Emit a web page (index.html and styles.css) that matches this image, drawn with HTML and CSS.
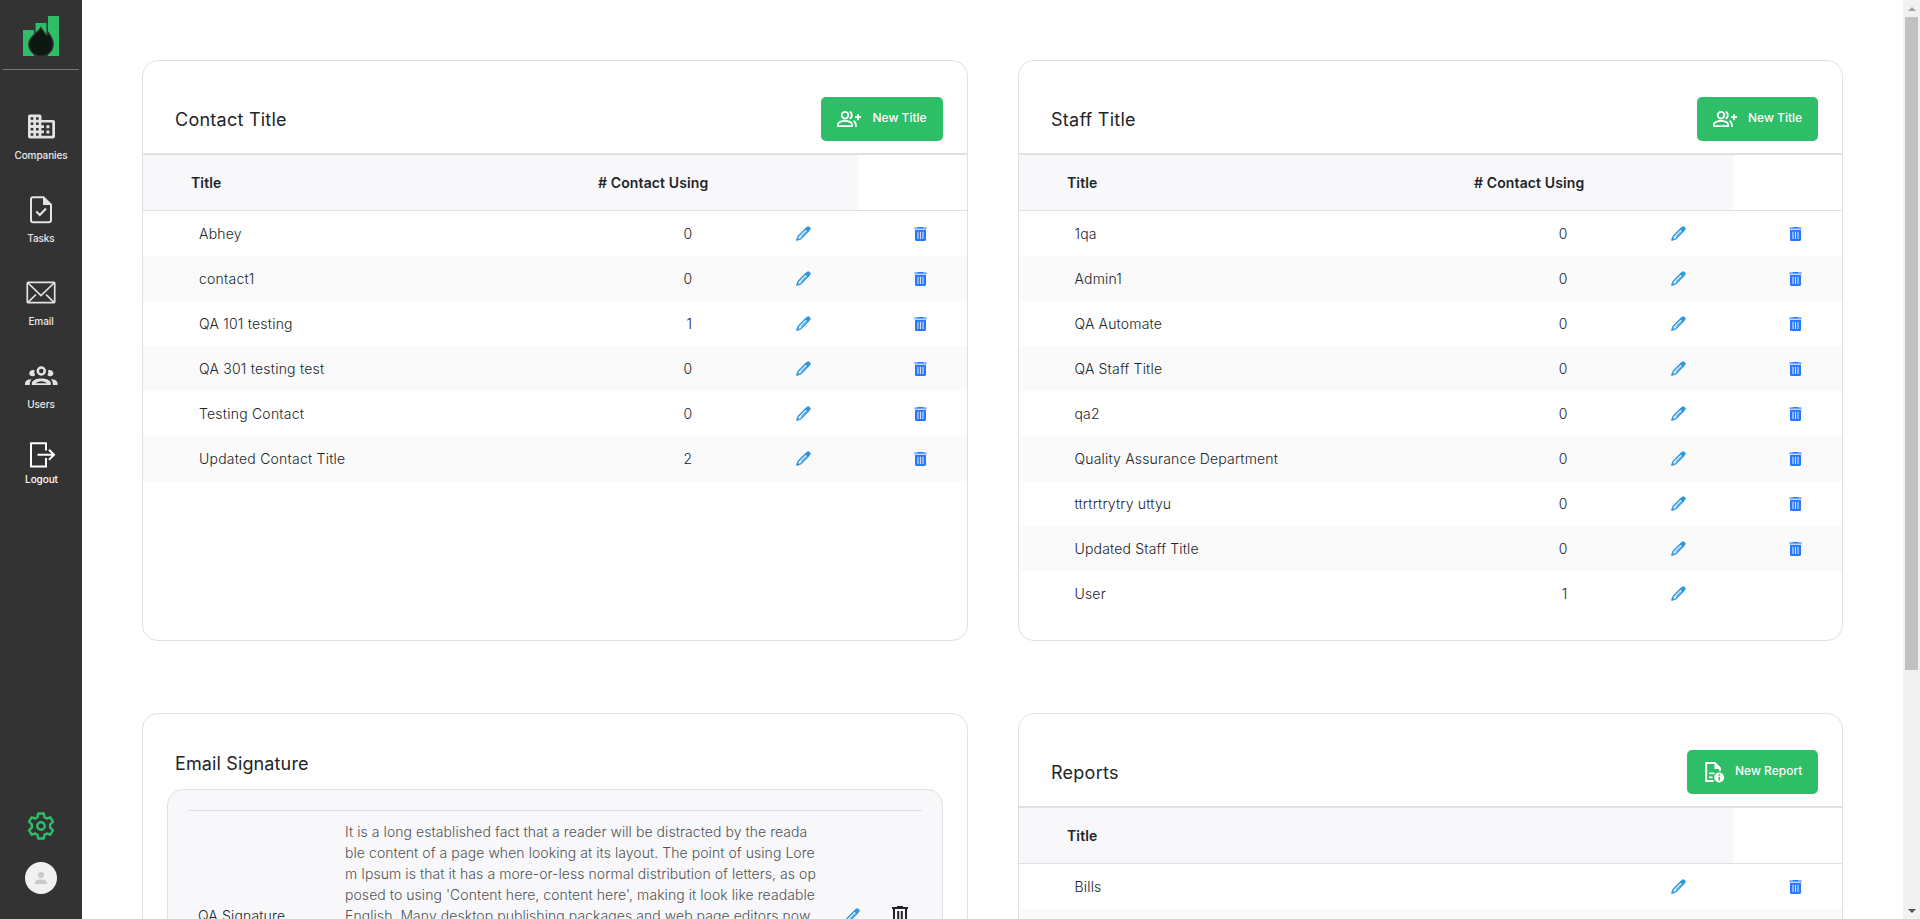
FILE: index.html
```html
<!DOCTYPE html>
<html lang="en">
<head>
<meta charset="utf-8">
<title>Settings</title>
<link rel="stylesheet" href="styles.css">
</head>
<body>
<svg class="defs" width="0" height="0">
  <symbol id="pencil" viewBox="0 0 15 15">
    <path d="M1.200 13.800 2.200 10.200 10.200 2.300 12.700 4.800 4.800 12.800Z" fill="#eaf5fd" stroke="#2f96e0" stroke-width="1.400" stroke-linejoin="round"/>
    <path d="M5 10.600 10.400 5.200" stroke="#2f96e0" stroke-width="1" fill="none"/>
    <path d="M8.800 3 11.400.6Q12.400-.2 13.300.7L14.300 1.800Q15.200 2.700 14.400 3.600L12 6.200Z" fill="#2f96e0"/>
    <path d="M.2 14.800 1 11.600 3.400 14Z" fill="#2f96e0"/>
  </symbol>
  <symbol id="trash" viewBox="0 0 13 14">
    <path d="M4 0h5l.6.500H12.500V1.800H.5V.5H3.400Z" fill="currentColor"/>
    <path d="M.5 1.800H12.500V3H.5Z" fill="#c5d4fb"/>
    <path d="M1 3H12V12.400Q12 14 10.400 14H2.600Q1 14 1 12.400Z" fill="currentColor"/>
    <path d="M4 4.800V12M6.500 4.800V12M9 4.800V12" stroke="#d5e0ff" stroke-width="1.100"/>
  </symbol>
  <symbol id="people-plus" viewBox="0 0 24 16">
    <g fill="none" stroke="#fff" stroke-width="1.800">
      <circle cx="8" cy="4.200" r="3.300"/>
      <path d="M.9 15.100V13.300C.9 11.200 4.500 9.900 8 9.900S15.100 11.200 15.100 13.300V15.100Z"/>
      <path d="M12.600.9C15.500 1.600 15.500 6.800 12.600 7.500M16.500 9.800C18.400 10.800 19 12 19 16"/>
      <path d="M21 3.200V9.200M18 6.200H24"/>
    </g>
  </symbol>
</svg>

<aside class="sidebar">
  <div class="brand">
    <svg width="37" height="41" viewBox="0 0 37 41">
      <path d="M0 14H11V40H0ZM12.500 7H23.500V40H12.500ZM25 0H36V40H25Z" fill="#2dbe67"/>
      <path d="M18 11.500C20 15 22 16.800 23.400 19.500Q24.700 18.500 25.400 16.700C28 20 30.200 24 30.200 28A12.200 12.200 0 0 1 5.800 28C5.800 20.500 14.500 17.500 18 11.500Z" fill="#0e1813" stroke="#333" stroke-width="1.400"/>
    </svg>
  </div>
  <nav class="nav">
    <a class="nav-item">
      <svg width="34" height="34" viewBox="0 0 34 34">
        <path d="M6 4.500H15.500Q17.500 4.500 17.500 6.500V10H29Q31 10 31 12V26.500Q31 28.500 29 28.500H6Q4 28.500 4 26.500V6.500Q4 4.500 6 4.500Z" fill="#e3e3e3"/>
        <path d="M6.700 7.200h2.600v2.600h-2.600zM12 7.200H14.600v2.600h-2.600zM6.700 12.500h2.600v2.600h-2.600zM12 12.500H14.600v2.600h-2.600zM6.700 17.900h2.600v2.600h-2.600zM12 17.900H14.600v2.600h-2.600zM6.700 23.200h2.600v2.600h-2.600zM12 23.200H14.600v2.600h-2.600z" fill="#333"/>
        <path d="M17.400 12.600H28.300V25.800H17.400V23.200H20V20.600H17.400V18H20V15.300H17.400Z" fill="#333"/>
        <path d="M22.400 15.300h3v3h-3zM22.400 20.500h3v3h-3z" fill="#e3e3e3"/>
      </svg>
      <span>Companies</span>
    </a>
    <a class="nav-item">
      <svg width="34" height="34" viewBox="0 0 34 34">
        <path d="M9 4.200H19.500L27 11.700V27Q27 29.200 24.800 29.200H9Q7 29.200 7 27V6.200Q7 4.200 9 4.200Z" fill="none" stroke="#e3e3e3" stroke-width="2"/>
        <path d="M19 4V12H27.500Z" fill="#e3e3e3"/>
        <path d="M12.300 18.500 15.800 22 22 15.500" fill="none" stroke="#e3e3e3" stroke-width="2"/>
      </svg>
      <span>Tasks</span>
    </a>
    <a class="nav-item">
      <svg width="34" height="34" viewBox="0 0 34 34" fill="none" stroke="#e3e3e3" stroke-width="1.700">
        <rect x="3.300" y="6.300" width="27.400" height="20.400" rx="1"/>
        <path d="M4 7 17 19.500 30 7M4 26.300 12 18.500M30 26.300 22 18.500"/>
      </svg>
      <span>Email</span>
    </a>
    <a class="nav-item">
      <svg width="34" height="34" viewBox="0 0 34 34">
        <circle cx="17.300" cy="12" r="3.500" fill="none" stroke="#e3e3e3" stroke-width="2.500"/>
        <path d="M10.500 11.200C6.800 10.500 5 13 5.200 14.800 5.500 17.500 9.500 18.300 11.200 15.800Q9.800 13.500 10.500 11.200ZM24.100 11.200C27.800 10.500 29.600 13 29.400 14.800 29.100 17.500 25.100 18.300 23.400 15.800Q24.800 13.500 24.100 11.200Z" fill="#e3e3e3"/>
        <path d="M7.800 26V23.800C9.300 18 25.300 18 26.800 23.800V26Z" fill="#e3e3e3"/>
        <path d="M11.300 24.200Q17.300 20.200 23.300 24.200Z" fill="#333"/>
        <path d="M1 26V24Q2 20 7.500 20.200 5.500 22.500 5.700 26ZM33.600 26V24Q32.600 20 27.100 20.200 29.100 22.500 28.900 26Z" fill="#e3e3e3"/>
      </svg>
      <span>Users</span>
    </a>
    <a class="nav-item logout">
      <svg width="34" height="34" viewBox="0 0 34 34" fill="none" stroke="#fff" stroke-width="2">
        <path d="M22 12.500V5.200H7V28.500H22V20M13.500 16.700H30M25 11.700 30 16.700 25 21.700"/>
      </svg>
      <span>Logout</span>
    </a>
  </nav>
  <div class="side-bottom">
    <svg width="26" height="28" viewBox="0 0 26 28" fill="none" stroke="#2dbe67" stroke-width="2.400" stroke-linejoin="round">
      <path d="M10.200 1.500H15.800L16.500 5.200 18.800 6.500 22.300 5.300 25 9.700 22.200 12.300V15.700L25 18.300 22.300 22.700 18.800 21.500 16.500 22.800 15.800 26.500H10.200L9.500 22.800 7.200 21.500 3.700 22.700 1 18.300 3.800 15.700V12.300L1 9.700 3.700 5.300 7.200 6.500 9.500 5.200Z"/>
      <circle cx="13" cy="14" r="3.700"/>
    </svg>
    <div class="avatar">
      <svg width="12" height="12" viewBox="0 0 12 12" fill="#c9c9c9"><circle cx="6" cy="3" r="3"/><path d="M0 12V10.500C0 6.500 12 6.500 12 10.500V12Z"/></svg>
    </div>
  </div>
</aside>

<main class="content">
  <section class="card">
    <header class="card-head">
      <h2>Contact Title</h2>
      <button class="btn"><svg width="24" height="16"><use href="#people-plus"/></svg><span>New Title</span></button>
    </header>
    <div class="thead"><b>Title</b><b># Contact Using</b><i></i></div>
    <div class="rows" id="contacts"></div>
  </section>
  <section class="card">
    <header class="card-head">
      <h2>Staff Title</h2>
      <button class="btn narrow"><svg width="24" height="16"><use href="#people-plus"/></svg><span>New Title</span></button>
    </header>
    <div class="thead"><b>Title</b><b># Contact Using</b><i></i></div>
    <div class="rows" id="staff"></div>
  </section>
  <section class="card">
    <h2 class="sig-title">Email Signature</h2>
    <div class="sig-box">
      <div class="sig-row">
        <div class="sig-name">QA Signature</div>
        <p class="sig-text">It is a long established fact that a reader will be distracted by the reada<br>ble content of a page when looking at its layout. The point of using Lore<br>m Ipsum is that it has a more-or-less normal distribution of letters, as op<br>posed to using 'Content here, content here', making it look like readable<br>English. Many desktop publishing packages and web page editors now</p>
        <svg class="sig-pencil" width="15" height="15"><use href="#pencil"/></svg>
        <svg class="sig-trash" width="16" height="19" viewBox="0 0 16 19" fill="none" stroke="#212529" stroke-width="2"><path d="M0 2H16M5 1H11M2 3V18H14V3M6.200 5V16M9.800 5V16"/></svg>
      </div>
    </div>
  </section>
  <section class="card">
    <header class="card-head">
      <h2>Reports</h2>
      <button class="btn report">
        <svg width="20" height="21" viewBox="0 0 20 21">
          <path d="M8.500 19.100H1.100V1.100H10L15 6.200V9" fill="none" stroke="#fff" stroke-width="2" stroke-linejoin="round"/>
          <path d="M9.500 1V7H16ZM4 10.500H9.500V12.200H4ZM4 14.500H7.500V16.200H4Z" fill="#fff"/>
          <circle cx="14.200" cy="15.500" r="5" fill="#fff"/>
          <path d="M14.200 12.300V13.700M14.200 14.700V18.600" stroke="#2dbe67" stroke-width="1.500"/>
        </svg><span>New Report</span></button>
    </header>
    <div class="thead"><b>Title</b><b></b><i></i></div>
    <div class="rows" id="reports"></div>
  </section>
</main>

<div class="scrollbar"><span class="arrow up"></span><span class="thumb"></span><span class="arrow down"></span></div>
<script src="app.js"></script>
</body>
</html>
```
FILE: styles.css
```css
* { box-sizing: border-box; }
body {
  margin: 0;
  height: 919px;
  display: flex;
  overflow: hidden;
  background: #fff;
  color: #212529;
  font-family: Inter, "Liberation Sans", sans-serif;
  font-size: 14px;
}
.defs { position: absolute; }
svg { display: block; flex: none; }
h2 { margin: 0; font-size: 18px; font-weight: 400; line-height: 22px; letter-spacing: .25px; }

.sidebar {
  width: 82px;
  flex: none;
  background: #333;
  display: flex;
  flex-direction: column;
  align-items: center;
}
.brand {
  width: 76px;
  height: 70px;
  padding: 16px 0 0 20px;
  border-bottom: 1px solid #777;
}
.nav {
  display: flex;
  flex-direction: column;
  gap: 31px;
  padding-top: 40px;
}
.nav-item {
  height: 52px;
  display: flex;
  flex-direction: column;
  align-items: center;
  gap: 4px;
  color: #e9e9e9;
  font-size: 10px;
  font-weight: 500;
  line-height: 14px;
  letter-spacing: -.1px;
}
.logout { margin-top: -4px; gap: 0; padding-left: 1px; color: #fff; }
.side-bottom {
  margin-top: auto;
  padding-bottom: 25px;
  display: flex;
  flex-direction: column;
  align-items: center;
  gap: 22px;
}
.avatar {
  width: 32px;
  height: 32px;
  border-radius: 50%;
  background: #f1f1f1;
  display: grid;
  place-items: center;
}

.content {
  flex: 1;
  display: grid;
  grid-template-columns: 826px 825px;
  grid-template-rows: 581px 400px;
  gap: 72px 50px;
  padding: 60px 0 0 60px;
  overflow: hidden;
}
.card { border: 1px solid #dee0e1; border-radius: 16px; overflow: hidden; }
.card-head {
  height: 94px;
  padding: 36px 24px 0 32px;
  border-bottom: 2px solid #dee0e1;
  display: flex;
  justify-content: space-between;
}
.card-head h2 { padding-top: 12px; }
.btn {
  width: 122px;
  height: 44px;
  border: 0;
  border-radius: 5px;
  background: #2dbe67;
  color: #fff;
  padding: 0 0 0 16px;
  display: flex;
  align-items: center;
  gap: 11.500px;
  font: 500 12px Inter, sans-serif;
}
.btn span { padding-bottom: 3px; white-space: nowrap; }
.narrow { width: 121px; gap: 11px; }
.report { width: 131px; padding-left: 18px; gap: 10px; }

.thead {
  height: 56px;
  display: grid;
  grid-template-columns: 407px 308px 1fr;
  border-bottom: 1px solid #dee0e1;
  line-height: 55px;
}
.thead b { background: #f8f8fb; padding-left: 48px; font-weight: 600; letter-spacing: .12px; }
.row {
  height: 45px;
  display: grid;
  grid-template-columns: 525px 24.300px 103.700px 118px 1fr;
  align-items: center;
  font-weight: 300;
  letter-spacing: .22px;
}
#staff .row, #reports .row { grid-template-columns: 524.500px 24px 103.500px 118px 1fr; letter-spacing: .17px; }
.row:nth-child(even) { background: #fafafa; }
.row .name { padding-left: 56px; }
#staff .name, #reports .name { padding-left: 55.500px; }
.row .count { text-align: right; }
.row .trash { color: #2678ff; }

.sig-title { padding: 39px 0 0 32px; letter-spacing: .13px; }
.sig-box {
  width: 776px;
  height: 330px;
  margin: 14px 0 0 24px;
  padding: 20px 20px 0;
  background: #f8f8fb;
  border: 1px solid #dee0e1;
  border-radius: 16px;
}
.sig-row {
  border-top: 1px solid #dee0e1;
  display: grid;
  grid-template-columns: 157px 500px 47px 1fr;
  padding-top: 10px;
}
.sig-name { padding: 84px 0 0 10px; line-height: 21px; font-weight: 300; letter-spacing: .15px; }
.sig-text { margin: 0; font-weight: 300; line-height: 21px; color: #505356; letter-spacing: .06px; white-space: nowrap; }
.sig-pencil { margin-top: 87px; }
.sig-trash { margin-top: 85px; }

.scrollbar {
  width: 17px;
  flex: none;
  background: #f1f1f1;
  display: flex;
  flex-direction: column;
  align-items: center;
}
.arrow { width: 17px; height: 17px; display: grid; place-items: center; }
.arrow::after { content: ""; border: 4px solid transparent; }
.up::after { border-top: 0; border-bottom-color: #a3a3a3; }
.down::after { border-bottom: 0; border-top-color: #505050; }
.thumb { width: 13px; height: 653px; background: #c1c1c1; }
.down { margin-top: auto; }
```
FILE: app.js
```js
const lists = {
  contacts: [["Abhey", 0], ["contact1", 0], ["QA 101 testing", 1], ["QA 301 testing test", 0],
    ["Testing Contact", 0], ["Updated Contact Title", 2]],
  staff: [["1qa", 0], ["Admin1", 0], ["QA Automate", 0], ["QA Staff Title", 0], ["qa2", 0],
    ["Quality Assurance Department", 0], ["ttrtrtrytry uttyu", 0], ["Updated Staff Title", 0], ["User", 1, true]],
  reports: [["Bills", ""], ["", ""]]
};
for (const [id, rows] of Object.entries(lists)) {
  document.getElementById(id).innerHTML = rows.map(([name, count, locked]) =>
    `<div class="row"><span class="name">${name}</span><span class="count">${count}</span><span></span>` +
    `<svg width="15" height="15"><use href="#pencil"/></svg>` +
    (locked ? "" : `<svg class="trash" width="13" height="14"><use href="#trash"/></svg>`) + `</div>`).join("");
}
```
